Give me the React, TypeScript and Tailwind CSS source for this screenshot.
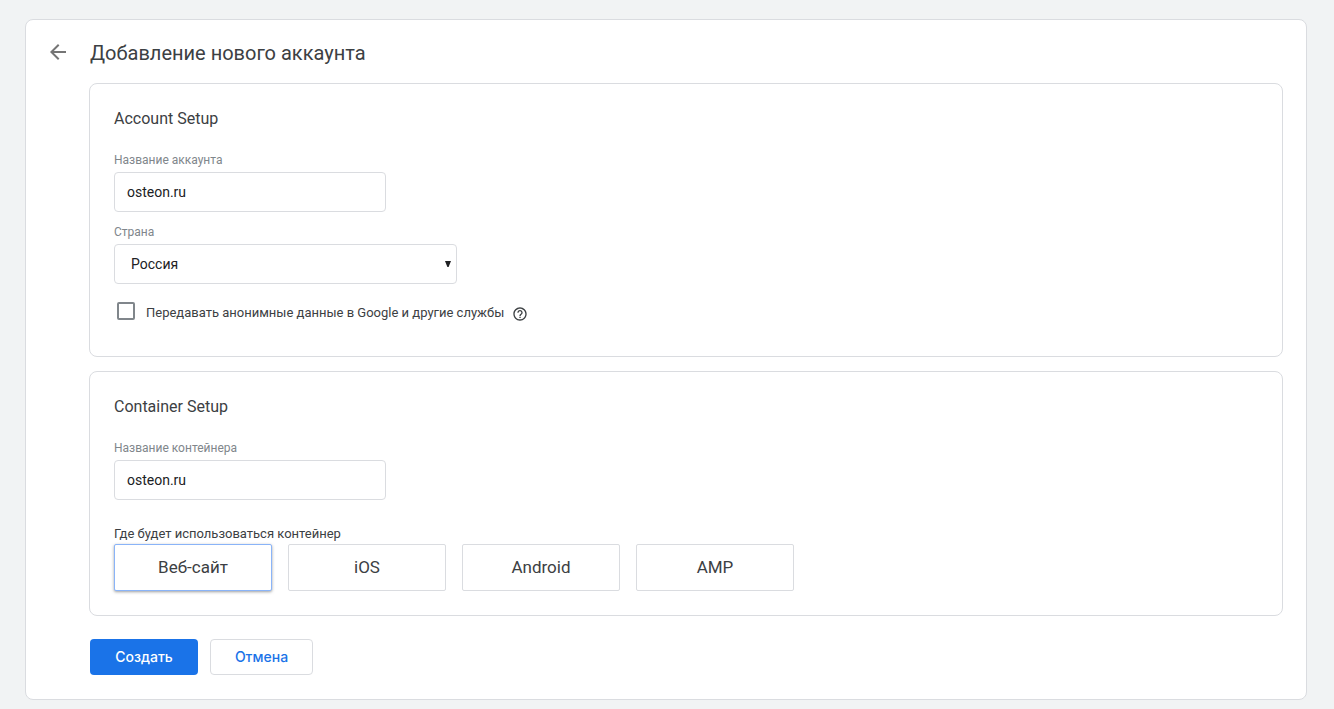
import { useState } from "react";
import type { ReactNode } from "react";
import { MdArrowBack, MdHelpOutline } from "react-icons/md";

const TARGETS = ["Веб-сайт", "iOS", "Android", "AMP"];

function Panel({ title, children }: { title: string; children: ReactNode }) {
	return (
		<section className="rounded-lg border border-[#dadce0] px-6 pt-[23px]">
			<h2 className="text-base leading-6 text-[#3c4043]">{title}</h2>
			{children}
		</section>
	);
}

function TextField({ id, label, value }: { id: string; label: string; value: string }) {
	return (
		<div className="mt-[21px]">
			<label htmlFor={id} className="block text-xs leading-4 text-[#80868b]">
				{label}
			</label>
			<input
				id={id}
				type="text"
				defaultValue={value}
				className="mt-1 block h-10 w-[272px] rounded border border-[#dadce0] bg-white px-3 text-sm text-[#202124] outline-none"
			/>
		</div>
	);
}

export default function App() {
	const [target, setTarget] = useState("Веб-сайт");

	return (
		<div className="min-h-screen bg-[#f1f3f4] pt-[19px] pb-[9px] font-['Roboto',sans-serif] text-[#3c4043]">
			<main className="mr-[27px] ml-[25px] rounded-lg border border-[#dadce0] bg-white pr-[23px] pb-6 pl-5">
				{/* ===== Header ===== */}
				<header className="flex h-[63px] items-center gap-5">
					<button type="button" aria-label="Назад" className="text-[#757575]">
						<MdArrowBack size={24} />
					</button>
					<h1 className="pt-0.5 text-xl leading-7">Добавление нового аккаунта</h1>
				</header>

				<form className="ml-[43px]" onSubmit={(e) => e.preventDefault()}>
					<div className="flex flex-col gap-[14px]">
						{/* ===== Account ===== */}
						<Panel title="Account Setup">
							<TextField id="account" label="Название аккаунта" value="osteon.ru" />

							<div className="mt-3">
								<label htmlFor="country" className="block text-xs leading-4 text-[#80868b]">
									Страна
								</label>
								<div className="relative mt-1 w-[343px]">
									<select
										id="country"
										className="block h-10 w-full appearance-none rounded border border-[#dadce0] bg-white px-4 text-sm text-[#202124] outline-none">
										<option>Россия</option>
									</select>
									<svg
										viewBox="0 0 6 6"
										className="pointer-events-none absolute top-[17px] right-[6px] size-[6px] fill-[#202124]">
										<path d="M0 0h6L3.6 6h-1.2z" />
									</svg>
								</div>
							</div>

							<div className="mt-[18px] flex items-start pb-8 pl-[3px]">
								<input
									id="share"
									type="checkbox"
									className="size-[18px] appearance-none rounded-xs border-2 border-[#80868b] checked:bg-[#1a73e8]"
								/>
								<label htmlFor="share" className="ml-[11px] text-[13px] leading-[22px]">
									Передавать анонимные данные в Google и другие службы
								</label>
								<button type="button" aria-label="Справка" className="mt-1 ml-2">
									<MdHelpOutline size={16} />
								</button>
							</div>
						</Panel>

						{/* ===== Container ===== */}
						<Panel title="Container Setup">
							<TextField id="container" label="Название контейнера" value="osteon.ru" />

							<fieldset className="mt-6 pb-6">
								<legend className="text-[13px] leading-5">Где будет использоваться контейнер</legend>
								<div className="flex flex-wrap gap-4">
									{TARGETS.map((name) => (
										<button
											key={name}
											type="button"
											aria-pressed={name === target}
											onClick={() => setTarget(name)}
											className={
												"h-[47px] w-[158px] rounded-xs border bg-white text-[17px] " +
												(name === target
													? "border-[#8ab4f8] shadow-[0_1px_3px_rgba(60,64,67,0.5)]"
													: "border-[#dadce0]")
											}>
											{name}
										</button>
									))}
								</div>
							</fieldset>
						</Panel>
					</div>

					{/* ===== Actions ===== */}
					<div className="mt-[23px] ml-px flex gap-3 font-['Inter',sans-serif] text-sm font-medium">
						<button type="submit" className="h-9 w-[108px] rounded bg-[#1a73e8] text-white">
							Создать
						</button>
						<button
							type="button"
							className="h-9 w-[103px] rounded border border-[#dadce0] bg-white text-[#1a73e8]">
							Отмена
						</button>
					</div>
				</form>
			</main>
		</div>
	);
}
